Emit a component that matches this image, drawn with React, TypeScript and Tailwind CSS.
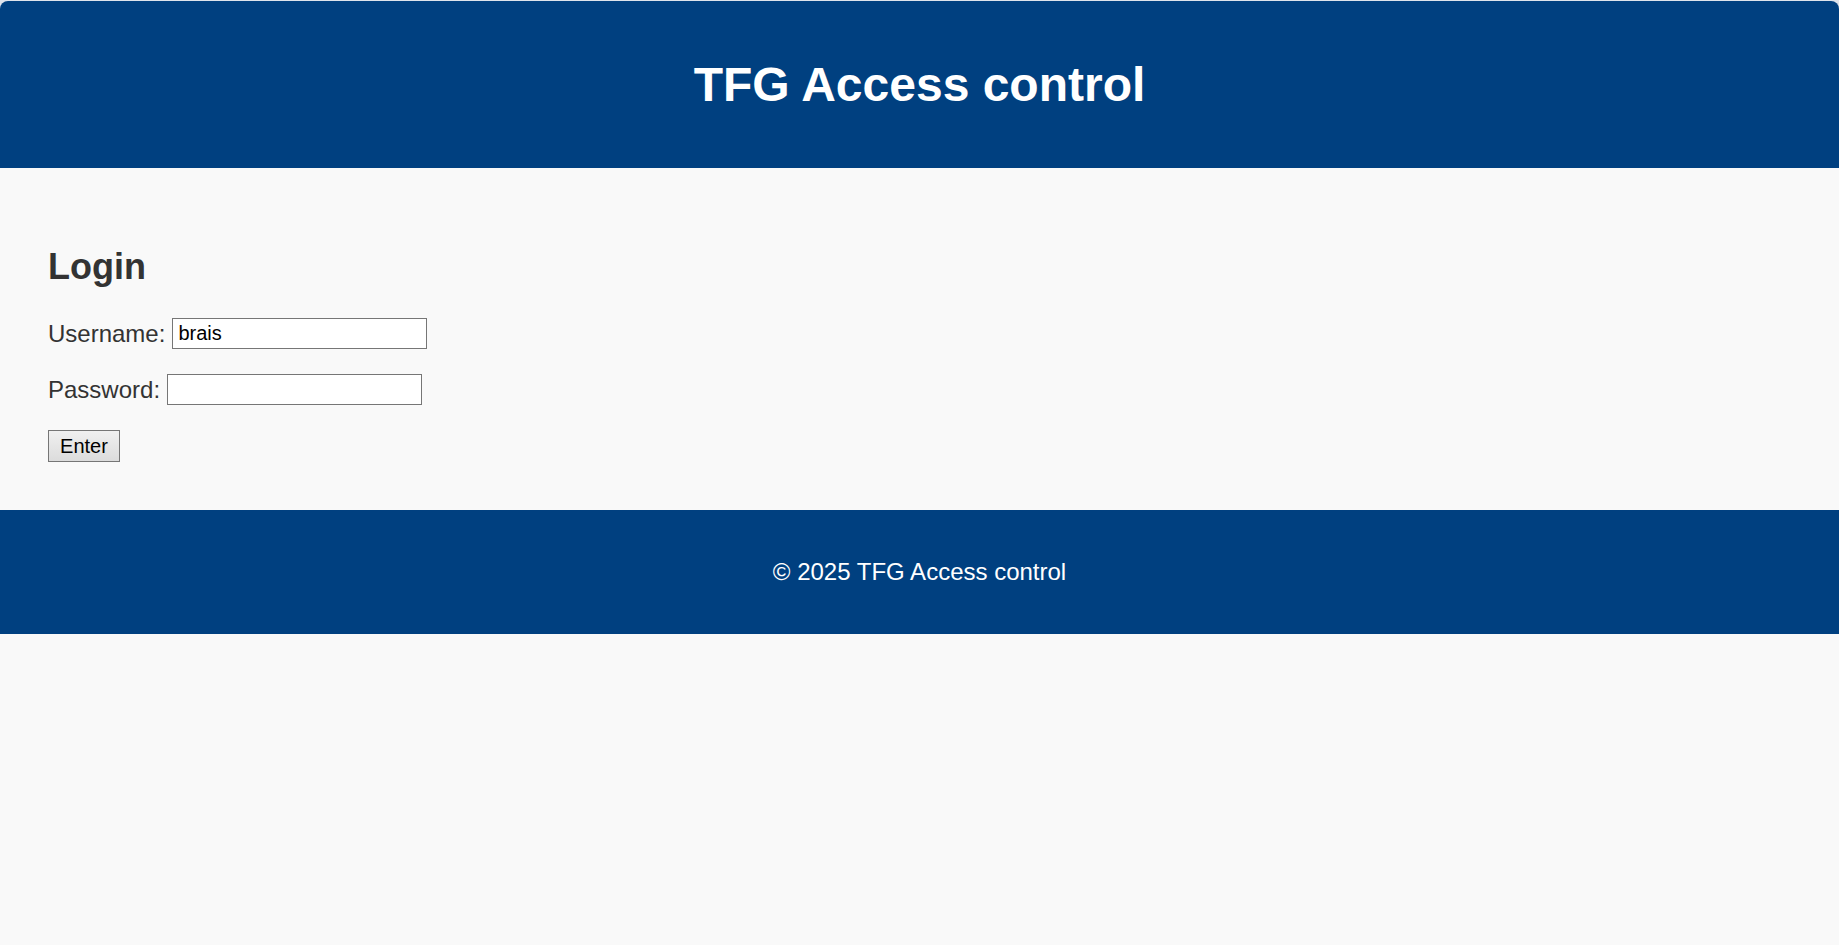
import { useState } from "react"

export default function App() {
  const [username, setUsername] = useState("brais")
  const [password, setPassword] = useState("")

  return (
    <div className="min-h-[945px] bg-[#f9f9f9] font-['Liberation_Sans',Arial,sans-serif] text-[#333]">
      <div className="bg-[#dfe4ec] pt-[1px]">
        <header className="flex h-[167px] items-center justify-center rounded-t-[8px] bg-[#004080]">
          <h1 className="text-[48px] font-bold leading-[55px] text-white">TFG Access control</h1>
        </header>
      </div>

      <main className="px-[48px] pb-[48px] pt-[78px]">
        <h2 className="h-[41px] text-[36px] font-bold leading-[41px]">Login</h2>

        <form className="mt-[31px] flex flex-col gap-[25px]" onSubmit={(e) => e.preventDefault()}>
          <div className="flex h-[31px] items-center text-[24px]">
            <label htmlFor="username">Username:</label>
            <input
              id="username"
              type="text"
              value={username}
              onChange={(e) => setUsername(e.target.value)}
              className="ml-[7px] h-[31px] w-[255px] border border-[#767676] bg-white px-[5px] py-[3px] text-[20px] text-black outline-none"
            />
          </div>

          <div className="flex h-[31px] items-center text-[24px]">
            <label htmlFor="password">Password:</label>
            <input
              id="password"
              type="password"
              value={password}
              onChange={(e) => setPassword(e.target.value)}
              className="ml-[7px] h-[31px] w-[255px] border border-[#767676] bg-white px-[5px] py-[3px] text-[20px] text-black outline-none"
            />
          </div>

          <div>
            <button
              type="submit"
              className="flex h-[32px] w-[72px] items-center justify-center border border-[#767676] bg-gradient-to-b from-[#f0f0f0] to-[#dcdcdc] text-[20px] text-black"
            >
              Enter
            </button>
          </div>
        </form>
      </main>

      <footer className="flex h-[124px] items-center justify-center bg-[#004080] text-[24px] text-white">
        © 2025 TFG Access control
      </footer>
    </div>
  )
}
